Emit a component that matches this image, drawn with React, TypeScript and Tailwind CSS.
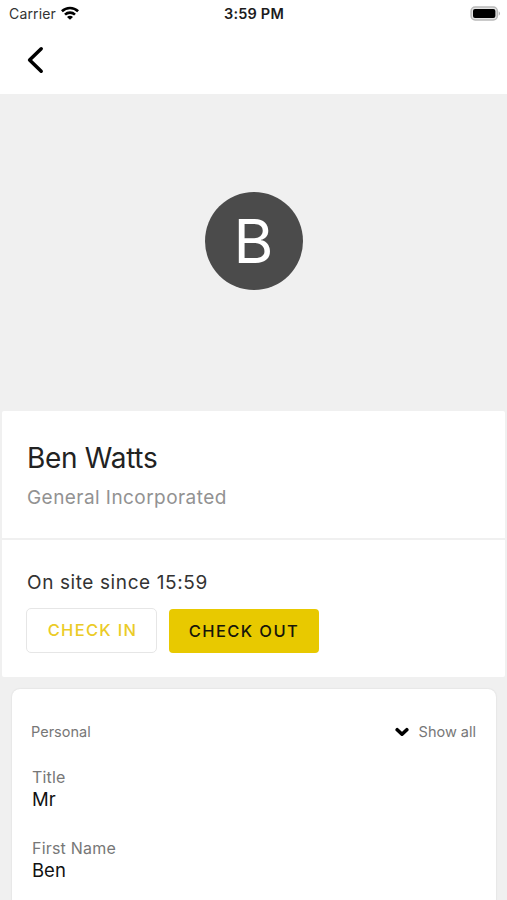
import React from "react";

function StatusBar() {
  return (
    <div className="grid h-7 grid-cols-3 items-center pl-[8px] pr-[6px]">
      <div className="flex items-center gap-[5px] pl-px text-[14px] leading-7 text-[#333]">
        <span className="tracking-[0.15px]">Carrier</span>
        <svg width="18" height="14" viewBox="0 0 18 14" className="-mt-[2px]" fill="none" stroke="#000" strokeWidth="2.6">
          <path d="M0.9 5.3C5.5 0.9 12.5 0.9 17.1 5.3" />
          <path d="M4 8.6C6.8 5.9 11.2 5.9 14 8.6" />
          <path d="M9 13.8L6 10.9C7.8 9.3 10.2 9.3 12 10.9Z" fill="#000" stroke="none" />
        </svg>
      </div>
      <div className="pr-px text-center text-[14.5px] font-semibold leading-7 tracking-[0.2px] text-[#1c1c1c]">
        <span className="whitespace-nowrap">3:59 PM</span>
      </div>
      <svg width="31" height="15" viewBox="0 0 31 15" className="-mt-[2px] justify-self-end">
        <rect x="1.1" y="1" width="26.2" height="13" rx="4" fill="#e4e4e4" stroke="#b9b9b9" strokeWidth="1.5" />
        <rect x="3" y="3" width="22.4" height="9" rx="2" fill="#000" />
        <path d="M28.7 5.3C30.5 6 30.5 9 28.7 9.7Z" fill="#b5b5b5" />
      </svg>
    </div>
  );
}

function Field({ label, value }: { label: string; value: string }) {
  return (
    <div className="h-[71px]">
      <div className="text-[16px] leading-[22px] tracking-[0.2px] text-[#777]">{label}</div>
      <div className="text-[18.5px] leading-[23px] text-[#111]">{value}</div>
    </div>
  );
}

export default function App() {
  return (
    <div className="flex h-[900px] w-[507px] flex-col overflow-hidden bg-[#f0f0f0] font-['Inter',sans-serif]">
      <header className="h-[94px] shrink-0 bg-white">
        <StatusBar />
        <button className="ml-[27px] mt-[18px] block" aria-label="Back">
          <svg width="17" height="28" viewBox="0 0 17 28" fill="none" stroke="#000" strokeWidth="3.5" strokeLinecap="round" strokeLinejoin="round">
            <path d="M14.2 2.8L2.6 14L14.2 25.2" />
          </svg>
        </button>
      </header>

      <div className="flex h-[317px] shrink-0 justify-center pt-[98px]">
        <div className="flex h-[98px] w-[98px] items-center justify-center rounded-full bg-[#4b4b4b] pt-px text-[61px] leading-none text-white">
          B
        </div>
      </div>

      <section className="mx-[2px] h-[266px] shrink-0 rounded-[2px] bg-white">
        <div className="h-[129px] border-b-2 border-[#f0f0f0] pl-[25px] pt-[29px]">
          <h1 className="text-[28px] leading-9 tracking-[-0.3px] text-[#222]">Ben Watts</h1>
          <p className="mt-[10px] text-[19px] leading-6 tracking-[0.44px] text-[#929292]">General Incorporated</p>
        </div>
        <div className="pl-6 pt-[31px]">
          <p className="pl-px text-[19px] leading-6 tracking-[0.6px] text-[#333]">On site since 15:59</p>
          <div className="mt-[13px] flex gap-3">
            <button className="h-[45px] w-[131px] rounded-[5px] border border-[#e6e6e6] pl-[2px] text-[16.5px] font-medium tracking-[1.3px] text-[#ebcb26]">
              CHECK IN
            </button>
            <button className="mt-px h-[44px] w-[150px] rounded-[4px] bg-[#e8c900] text-[16.5px] font-medium tracking-[1.4px] text-[#17160a]">
              CHECK OUT
            </button>
          </div>
        </div>
      </section>

      <section className="ml-3 mr-[11px] mt-3 h-[230px] shrink-0 rounded-t-[8px] bg-white px-5 pt-[32px] shadow-[0_0_2px_rgba(0,0,0,0.12)]">
        <div className="-ml-px flex h-[21px] items-center justify-between text-[14.5px] text-[#777]">
          <span>Personal</span>
          <button className="flex items-center gap-[10px]">
            <svg width="14" height="10" viewBox="0 0 14 10" fill="none" stroke="#000" strokeWidth="3.6" strokeLinecap="round" strokeLinejoin="round">
              <path d="M2.2 2.7L7 7.2L11.8 2.7" />
            </svg>
            <span>Show all</span>
          </button>
        </div>
        <div className="mt-6">
          <Field label="Title" value="Mr" />
          <Field label="First Name" value="Ben" />
        </div>
      </section>
    </div>
  );
}
